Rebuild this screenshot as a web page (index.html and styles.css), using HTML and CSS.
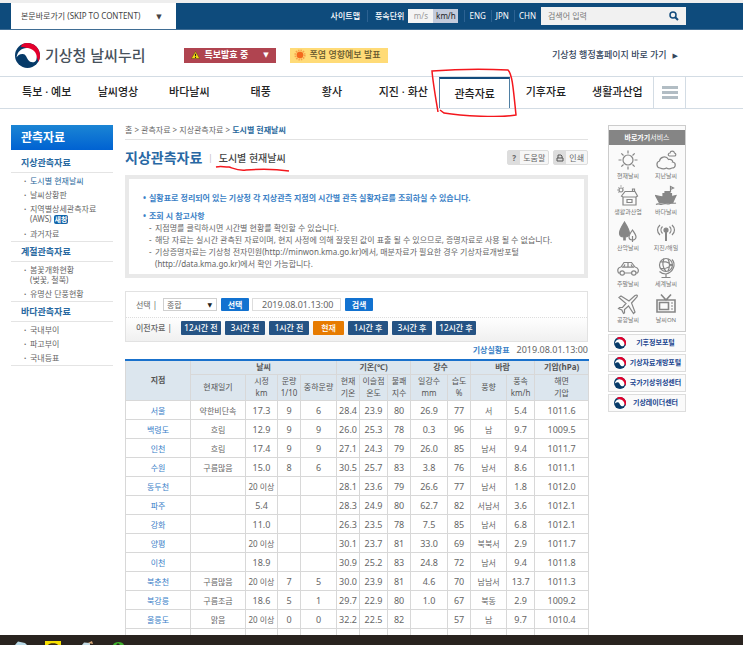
FILE: index.html
```html
<!DOCTYPE html>
<html lang="ko">

<head>
  <meta charset="UTF-8">
  <meta name="viewport" content="width=device-width, initial-scale=1.0">
  <title>기상청 날씨누리</title>
  <link rel="stylesheet" href="styles.css">
</head>

<body>
  <svg class="defs" aria-hidden="true">
    <symbol id="emblem" viewBox="0 0 24 24">
      <circle cx="12" cy="12" r="12" fill="#063a68" />
      <path d="M7 1.100A12 12 0 0 1 22.400 18C20.500 10 15 4 5.500 3.500z" fill="#e4002c" />
      <path d="M1.500 14C2 8 7 4 12.500 4.800C19 6 22 11.500 20.500 16C19 19.500 14.500 19 12.500 16C10.500 13 10.500 10.800 7.500 10.500C4.500 10.300 2.500 12 1.500 14z" fill="#fff" />
    </symbol>
  </svg>

  <div class="page">
    <div class="top">
      <div class="wrap top-in">
        <button class="skip">본문바로가기 (SKIP TO CONTENT)<span class="arr">▼</span></button>
        <div class="util">
          <a href="#">사이트맵</a>
          <span class="unit">풍속단위</span>
          <div class="toggle"><button>m/s</button><button class="on">km/h</button></div>
          <div class="lang"><a href="#">ENG</a><a href="#">JPN</a><a href="#">CHN</a></div>
          <form class="search">
            <input type="text" placeholder="검색어 입력" aria-label="검색어 입력">
            <button type="button" aria-label="검색">
              <svg viewBox="0 0 10 10" width="10" height="10"><circle cx="4" cy="4" r="3" fill="none" stroke="#124b7c" stroke-width="1.500" /><path d="M6.200 6.200L9 9" stroke="#124b7c" stroke-width="2" /></svg>
            </button>
          </form>
        </div>
      </div>
    </div>

    <header class="wrap header">
      <a class="brand" href="#"><svg class="logo"><use href="#emblem" /></svg>기상청 날씨누리</a>
      <button class="warn">
        <svg viewBox="0 0 10 9" width="9" height="8"><path d="M5 .5L9.700 8.500H.3z" fill="#f4d913" stroke="#5a4a10" stroke-width=".6" /><path d="M5 3v3M5 6.800v1" stroke="#222" stroke-width="1.200" /></svg>
        특보발효 중<span class="arr">▼</span>
      </button>
      <a class="heat" href="#">
        <svg viewBox="0 0 12 12" width="12" height="12"><circle cx="6" cy="6" r="4.600" fill="none" stroke="#f7a04a" stroke-width="2" stroke-dasharray="1.400 1" /><circle cx="6" cy="6" r="3.300" fill="#f4691c" /></svg>
        폭염 영향예보 발표
      </a>
      <a class="admin" href="#">기상청 행정홈페이지 바로 가기<span class="arr">▶</span></a>
    </header>

    <nav class="nav">
      <div class="wrap nav-in">
        <a href="#">특보 · 예보</a>
        <a href="#">날씨영상</a>
        <a href="#">바다날씨</a>
        <a href="#">태풍</a>
        <a href="#">황사</a>
        <a href="#">지진 · 화산</a>
        <a class="on" href="#">관측자료
          <svg class="pen" viewBox="0 0 92 52" width="92" height="52"><path d="M9 47C7 35 4 18 3 6C30 4 58 4 79 5C83 9 84 20 87 50C72 53 32 51 15 48L11 45" /></svg>
        </a>
        <a href="#">기후자료</a>
        <a href="#">생활과산업</a>
        <button class="all" aria-label="전체메뉴"><i></i><i></i><i></i></button>
      </div>
    </nav>

    <div class="wrap body">
      <aside class="side">
        <h2>관측자료</h2>
        <h3>지상관측자료</h3>
        <ul>
          <li><a class="on" href="#">도시별 현재날씨</a></li>
          <li><a href="#">날씨상황판</a></li>
          <li><a href="#">지역별상세관측자료<br>(AWS) <b>새창</b></a></li>
          <li><a href="#">과거자료</a></li>
        </ul>
        <h3>계절관측자료</h3>
        <ul>
          <li><a href="#">봄꽃개화현황<br>(벚꽃, 철쭉)</a></li>
          <li><a href="#">유명산 단풍현황</a></li>
        </ul>
        <h3>바다관측자료</h3>
        <ul>
          <li><a href="#">국내부이</a></li>
          <li><a href="#">파고부이</a></li>
          <li><a href="#">국내등표</a></li>
        </ul>
      </aside>

      <main class="main">
        <div class="path">홈 &gt; 관측자료 &gt; 지상관측자료 &gt; <b>도시별 현재날씨</b></div>
        <div class="title">
          <h1>지상관측자료</h1>
          <span class="bar">|</span>
          <h2>도시별 현재날씨
            <svg class="pen" viewBox="0 0 76 8" width="76" height="8"><path d="M1 2C6 1 8 2 14 2C20 4 24 6 31 5C45 4 60 4 74 6" /></svg>
          </h2>
          <div class="tools">
            <button><span class="ic">?</span>도움말</button>
            <button><span class="ic"><svg viewBox="0 0 8 8" width="8" height="8"><path d="M2 4V1h3l1 1v2M1 4h6v3H1z" fill="none" stroke="#555" /></svg></span>인쇄</button>
          </div>
        </div>

        <div class="info">
          <p class="dot">실황표로 정리되어 있는 기상청 각 지상관측 지점의 시간별 관측 실황자료를 조회하실 수 있습니다.</p>
          <p class="dot">조회 시 참고사항</p>
          <ul>
            <li>지점명를 클릭하시면 시간별 현황를 확인할 수 있습니다.</li>
            <li>해당 자료는 실시간 관측된 자료이며, 현지 사정에 의해 잘못된 값이 표출 될 수 있으므로, 증명자료로 사용 될 수 없습니다.</li>
            <li>기상증명자료는 기상청 전자민원(http://minwon.kma.go.kr)에서, 매분자료가 필요한 경우 기상자료개방포털<br>(http://data.kma.go.kr)에서 확인 가능합니다.</li>
          </ul>
        </div>

        <form class="form">
          <div class="row">
            <label for="kind">선택 |</label>
            <div class="sel"><select id="kind"><option>종합</option><option>기온</option></select></div>
            <button type="button" class="blue">선택</button>
            <input type="text" class="date" value="2019.08.01.13:00" aria-label="시각">
            <button type="button" class="blue">검색</button>
          </div>
          <div class="row times">
            <span>이전자료 |</span>
            <button type="button">12시간 전</button>
            <button type="button">3시간 전</button>
            <button type="button">1시간 전</button>
            <button type="button" class="now">현재</button>
            <button type="button">1시간 후</button>
            <button type="button">3시간 후</button>
            <button type="button">12시간 후</button>
          </div>
        </form>

        <div class="stamp"><b>기상실황표</b>2019.08.01.13:00</div>
        <table class="data">
          <colgroup>
            <col class="c65"><col class="c55"><col class="c32"><col class="c23"><col class="c36">
            <col class="c23"><col class="c28"><col class="c23"><col class="c37"><col class="c23">
            <col class="c36"><col class="c28"><col class="c54">
          </colgroup>
          <thead>
            <tr class="group">
              <th rowspan="2">지점</th>
              <th colspan="4">날씨</th>
              <th colspan="3">기온(℃)</th>
              <th colspan="2">강수</th>
              <th colspan="2">바람</th>
              <th>기압(hPa)</th>
            </tr>
            <tr class="sub">
              <th>현재일기</th>
              <th>시정<br>km</th>
              <th>운량<br>1/10</th>
              <th>중하운량</th>
              <th>현재<br>기온</th>
              <th>이슬점<br>온도</th>
              <th>불쾌<br>지수</th>
              <th>일강수<br>mm</th>
              <th>습도<br>%</th>
              <th>풍향</th>
              <th>풍속<br>km/h</th>
              <th>해면<br>기압</th>
            </tr>
          </thead>
          <tbody>
            <tr><td><a href="#">서울</a></td><td class="t">약한비단속</td><td>17.3</td><td>9</td><td>6</td><td>28.4</td><td>23.9</td><td>80</td><td>26.9</td><td>77</td><td class="t">서</td><td>5.4</td><td>1011.6</td></tr>
            <tr><td><a href="#">백령도</a></td><td class="t">흐림</td><td>12.9</td><td>9</td><td>9</td><td>26.0</td><td>25.3</td><td>78</td><td>0.3</td><td>96</td><td class="t">남</td><td>9.7</td><td>1009.5</td></tr>
            <tr><td><a href="#">인천</a></td><td class="t">흐림</td><td>17.4</td><td>9</td><td>9</td><td>27.1</td><td>24.3</td><td>79</td><td>26.0</td><td>85</td><td class="t">남서</td><td>9.4</td><td>1011.7</td></tr>
            <tr><td><a href="#">수원</a></td><td class="t">구름많음</td><td>15.0</td><td>8</td><td>6</td><td>30.5</td><td>25.7</td><td>83</td><td>3.8</td><td>76</td><td class="t">남서</td><td>8.6</td><td>1011.1</td></tr>
            <tr><td><a href="#">동두천</a></td><td></td><td class="t">20 이상</td><td></td><td></td><td>28.1</td><td>23.6</td><td>79</td><td>26.6</td><td>77</td><td class="t">남서</td><td>1.8</td><td>1012.0</td></tr>
            <tr><td><a href="#">파주</a></td><td></td><td>5.4</td><td></td><td></td><td>28.3</td><td>24.9</td><td>80</td><td>62.7</td><td>82</td><td class="t">서남서</td><td>3.6</td><td>1012.1</td></tr>
            <tr><td><a href="#">강화</a></td><td></td><td>11.0</td><td></td><td></td><td>26.3</td><td>23.5</td><td>78</td><td>7.5</td><td>85</td><td class="t">남서</td><td>6.8</td><td>1012.1</td></tr>
            <tr><td><a href="#">양평</a></td><td></td><td class="t">20 이상</td><td></td><td></td><td>30.1</td><td>23.7</td><td>81</td><td>33.0</td><td>69</td><td class="t">북북서</td><td>2.9</td><td>1011.7</td></tr>
            <tr><td><a href="#">이천</a></td><td></td><td>18.9</td><td></td><td></td><td>30.9</td><td>25.2</td><td>83</td><td>24.8</td><td>72</td><td class="t">남서</td><td>9.4</td><td>1011.8</td></tr>
            <tr><td><a href="#">북춘천</a></td><td class="t">구름많음</td><td class="t">20 이상</td><td>7</td><td>5</td><td>30.0</td><td>23.9</td><td>81</td><td>4.6</td><td>70</td><td class="t">남남서</td><td>13.7</td><td>1011.3</td></tr>
            <tr><td><a href="#">북강릉</a></td><td class="t">구름조금</td><td>18.6</td><td>5</td><td>1</td><td>29.7</td><td>22.9</td><td>80</td><td>1.0</td><td>67</td><td class="t">북동</td><td>2.9</td><td>1009.2</td></tr>
            <tr><td><a href="#">울릉도</a></td><td class="t">맑음</td><td class="t">20 이상</td><td>0</td><td>0</td><td>32.2</td><td>22.5</td><td>82</td><td></td><td>57</td><td class="t">남</td><td>9.7</td><td>1010.4</td></tr>
            <tr><td><a href="#">속초</a></td><td></td><td class="t">20 이상</td><td></td><td></td><td>31.0</td><td>24.2</td><td>82</td><td>0.3</td><td>67</td><td class="t">남동</td><td>6.1</td><td>1009.4</td></tr>
          </tbody>
        </table>
      </main>

      <aside class="quick">
        <div class="box">
          <h3><b>바로가기</b>서비스</h3>
          <div class="icons">
            <a href="#"><svg viewBox="0 0 22 22"><circle cx="11" cy="11" r="5" /><path d="M11 1.500v3M11 17.500v3M1.500 11h3M17.500 11h3M4.300 4.300l2.200 2.200M15.500 15.500l2.200 2.200M17.700 4.300l-2.200 2.200M4.300 17.700l2.200-2.200" /></svg>현재날씨</a>
            <a href="#"><svg viewBox="0 0 22 22"><path d="M5 19a3.600 3.600 0 0 1-.5-7C5 8 11 6 13.500 10.500C17 10 18 12 17.500 13C21.500 13.500 21 19 17 19C15 20 13 20 11.500 19C9 20.500 7 20 5 19z" /><path d="M14.500 7c-2-.5-1.500-3 .5-3C15.500 1.500 19 1.500 19.500 4C21.500 4.500 21 7 19.500 7z" /></svg>지난날씨</a>
            <a href="#"><svg viewBox="0 0 22 22"><path d="M6 20V12l-1.500-1L8 6.500h10l2.500 4.500L19 12v8zM6 12h13M10 14.500h5v3h-5zM15.500 6V4h2v2" /><circle cx="4" cy="5" r="2" /><path d="M4 .5v1M.3 5h1M1.500 2.500l.6.600M6.500 2.500l-.6.600M1.500 7.500l.6-.6" /></svg>생활과산업</a>
            <a href="#"><svg viewBox="0 0 22 22"><path class="fill" d="M.5 10.500L8 12V8.500h2V6.500h5v2h1.500v3L21 10.500L17.500 18H4.500z" /><path d="M15.500 7V1.500l3 1.500l-3 1.500M1 19.500c3-2 4 1 7-.5s4 1 7-.5s3 .5 6-.5" /></svg>바다날씨</a>
            <a href="#"><svg viewBox="0 0 22 22"><path class="fill" d="M7.500 1C10 5 12.500 9 12.500 12.500C12 15 10 16 8.200 16V19H6.800V16C4.500 16 2.500 14.500 2.500 12C2.500 9 5 5 7.500 1z" /><path class="white" d="M15.500 9C17.500 12 19 14 19 16C19 18 17 19 15.500 19C13.500 19 12 18 12 16C12 14 14 11 15.500 9zM15.500 15v6" /></svg>산악날씨</a>
            <a href="#"><svg viewBox="0 0 22 22"><circle class="fill" cx="11" cy="9" r="2" /><path d="M11 10v10" stroke-width="2" /><path d="M7.500 5.500c-2 2-2 5 0 7M14.500 5.500c2 2 2 5 0 7M5 4c-3.300 3-3.300 7 0 10M17 4c3.300 3 3.300 7 0 10" /></svg>지진/해일</a>
            <a href="#"><svg viewBox="0 0 22 22"><path d="M3 16H1.500C0 13 1 10.500 4 10L7 5.500h7.500L18 10C21.500 10.500 22 14 20.500 16H19M7.500 16h7M5 10.200h12M11 6v4M8 7.500l-1.500 2.500M14 7.500l1.500 2.500" /><circle cx="5.200" cy="16" r="2.200" /><circle cx="16.800" cy="16" r="2.200" /></svg>주말날씨</a>
            <a href="#"><svg viewBox="0 0 22 22"><circle cx="11" cy="8" r="6.500" /><path d="M5 5C9 4 14 5 17 9M5.500 11.500C9 12 13 12 17 7M9 1.500C7 6 8 11 11 14.500M13 2C15 6 15 10 13 14M17 2.500c4.500 5 1 13-6 14.500C8 17 6 16 4.500 14.500M11 17v3M6.500 20.500h9" /></svg>세계날씨</a>
            <a href="#"><svg viewBox="0 0 22 22"><path d="M2 4.500L4 3L12 8L18 2.500C20 1.500 21 2.500 20 4L14.500 10L18 19L16.500 20.500L11.500 13L7.500 16.500L7.500 20L6.500 20.500L4.800 17L1.500 15.500L2.500 14.500L5.500 14.500L9 10.500z" /></svg>공항날씨</a>
            <a href="#"><svg viewBox="0 0 22 22"><path d="M2 7h18v12H2zM4.500 9.500h9v7h-9zM6 1.500L11 7L16 1.500" stroke-width="1.600" /><path d="M16 10h2M16 13h2M16 16h2" /></svg>날씨ON</a>
          </div>
        </div>
        <a class="bn" href="#"><svg class="logo"><use href="#emblem" /></svg><span>기후정보포털</span></a>
        <a class="bn" href="#"><svg class="logo"><use href="#emblem" /></svg><span>기상자료개방포털</span></a>
        <a class="bn" href="#"><svg class="logo"><use href="#emblem" /></svg><span>국가기상위성센터</span></a>
        <a class="bn" href="#"><svg class="logo"><use href="#emblem" /></svg><span>기상레이더센터</span></a>
      </aside>
    </div>
  </div>

  <footer class="taskbar">
    <svg viewBox="0 0 130 10" width="130" height="10">
      <path d="M15 10L18 6.500L25 8L27 10z" fill="#b9d9e6" />
      <path d="M45 6h16v4H45z" fill="#f8e000" /><path d="M48 10C49 7.500 57 7.500 58 10z" fill="#3b2a17" />
      <path d="M82 10L84 7.500L90 8V10z" fill="#c4dbe4" /><path d="M88 8L92 6L93 9z" fill="#d9a877" />
      <path d="M113 10C114 6 123 6 124 10H120L118 8L116 10z" fill="#3fb02c" />
    </svg>
  </footer>
</body>

</html>
```

FILE: styles.css
```css
* {
  box-sizing: border-box;
}

body,
h1,
h2,
h3,
p,
ul {
  margin: 0;
  padding: 0;
}

body {
  display: flex;
  flex-direction: column;
  height: 100vh;
  overflow: hidden;
  font-family: "Noto Sans", "Noto Sans CJK KR", sans-serif;
  font-size: 8px;
  line-height: 12px;
  color: #666;
  background-color: #fff;
}

ul {
  list-style: none;
}

a {
  color: inherit;
  text-decoration: none;
}

button,
input,
select {
  margin: 0;
  padding: 0;
  border: 0;
  border-radius: 0;
  font: inherit;
  color: inherit;
  background: none;
}

svg {
  display: block;
  flex: none;
}

.defs {
  position: absolute;
  width: 0;
  height: 0;
}

.page {
  flex: 1;
  min-height: 0;
  overflow: hidden;
}

.wrap {
  padding: 0 57px 0 11px;
}

.arr {
  font-family: "DejaVu Sans", sans-serif;
  font-size: 7px;
}

/* 상단 */
.top {
  height: 30px;
  background-color: #0e4b7c;
  border-top: 3px solid #eee;
  border-bottom: 1px solid #3f6d94;
}

.top-in {
  display: flex;
  justify-content: space-between;
  height: 26px;
}

.skip {
  padding: 0 14px 0 10px;
  color: #444;
  background-color: #fff;
}

.skip .arr {
  margin-left: 16px;
}

.util {
  display: flex;
  align-items: center;
  color: #fff;
}

.unit {
  margin-left: 7px;
  padding-left: 7px;
  border-left: 1px solid #2c6292;
}

.util > a,
.unit {
  font-weight: 500;
}

.toggle {
  display: flex;
  margin-left: 4px;
}

.toggle button {
  width: 25px;
  height: 14px;
  color: #999;
  background-color: #f4f4f4;
}

.toggle .on {
  color: #222;
  background-color: #c3cbdc;
}

.lang {
  display: flex;
  margin-left: 6px;
}

.lang a {
  padding: 0 5px 0 4px;
  border-left: 1px solid #2c6292;
}

.search {
  display: flex;
  width: 145px;
  height: 18px;
  background-color: #f1f1f1;
}

.search input {
  flex: 1;
  min-width: 0;
  padding-left: 7px;
}

.search input::placeholder {
  color: #777;
}

.search button {
  padding: 0 7px;
}

.header {
  display: flex;
  align-items: center;
  height: 46px;
  padding-top: 4px;
  font-size: 9px;
}

.brand {
  display: flex;
  align-items: center;
  gap: 5px;
  padding-left: 4px;
  font-size: 15px;
  font-weight: 500;
  color: #48525c;
}

.brand .logo {
  width: 25px;
  height: 25px;
}

.warn,
.heat {
  display: flex;
  align-items: center;
  height: 15px;
  padding: 0 7px;
}

.warn {
  gap: 5px;
  width: 92px;
  margin-left: 38px;
  font-weight: 700;
  color: #fff;
  background-color: #b04450;
}

.warn .arr {
  margin-left: auto;
}

.heat {
  gap: 4px;
  width: 98px;
  margin-left: 14px;
  padding: 0 4px;
  font-weight: 500;
  color: #66582f;
  background-color: #ffdb77;
}

.admin {
  margin-left: auto;
  padding-right: 8px;
  font-weight: 500;
  color: #35465c;
}

.admin .arr {
  margin-left: 6px;
}

/* 메뉴 */
.nav {
  height: 33px;
  border-top: 1px solid #d3dce4;
  border-bottom: 1px solid #d3dce4;
}

.nav-in {
  display: grid;
  grid-template-columns: repeat(9, 1fr) 33px;
  height: 31px;
}

.nav a {
  font-size: 11px;
  font-weight: 500;
  line-height: 29px;
  text-align: center;
  color: #222;
  white-space: nowrap;
}

.nav .on {
  position: relative;
  border: 1px solid #4f7fa3;
  border-top: 2px solid #134b7c;
  border-bottom: 0;
}

.pen {
  position: absolute;
  fill: none;
  stroke: #f4171d;
  stroke-width: 1.5;
}

.nav .pen {
  top: -14px;
  left: -11px;
}

.all {
  display: flex;
  flex-direction: column;
  justify-content: center;
  align-items: center;
  gap: 2px;
  border-left: 1px solid #d3dce4;
  border-right: 1px solid #d3dce4;
}

.all i {
  width: 16px;
  height: 3px;
  background-color: #b2bdc4;
}

.body {
  display: grid;
  grid-template-columns: 102px 1fr 78px;
  align-items: start;
  padding-top: 13px;
}

/* 왼쪽 메뉴 */
.side,
.quick {
  margin-top: 3px;
}

.side h2 {
  height: 28px;
  padding-left: 10px;
  font-size: 12px;
  line-height: 25px;
  color: #fff;
  background: linear-gradient(#1b85d4, #0062d2) no-repeat 0 0 / 100% 25px;
}

.side h3 {
  height: 20px;
  padding-left: 10px;
  font-size: 9px;
  line-height: 19px;
  color: #2868a0;
  border-bottom: 1px solid #e4e4e4;
}

.side ul {
  padding: 1px 0 0 13px;
  border-bottom: 1px solid #e4e4e4;
}

.side li {
  display: flex;
  padding: 2px 0;
  line-height: 10px;
  white-space: nowrap;
}

.side li::before {
  content: "·";
  width: 6px;
  font-weight: 700;
}

.side .on {
  color: #28689c;
}

.side b {
  padding: 0 1px;
  font-size: 7px;
  color: #fff;
  background-color: #1264a8;
  border-radius: 2px;
}

.main {
  min-width: 0;
  margin: 0 20px 0 12px;
}

.path {
  height: 18px;
  line-height: 16px;
  border-bottom: 1px solid #e2e2e2;
}

.path b {
  color: #28689c;
}

.title {
  display: flex;
  align-items: center;
  height: 35px;
}

.title h1 {
  font-size: 14px;
  color: #2868a4;
}

.title .bar {
  margin: 0 6px;
  color: #bbb;
}

.title h2 {
  position: relative;
  font-size: 10px;
  font-weight: 500;
  color: #444;
}

.title .pen {
  top: 13px;
  left: -4px;
}

.tools {
  display: flex;
  gap: 4px;
  margin-left: auto;
}

.tools button {
  display: flex;
  align-items: center;
  gap: 3px;
  height: 15px;
  padding-right: 3px;
  background-color: #f6f6f6;
  border: 1px solid #ddd;
  border-radius: 2px;
}

.tools .ic {
  display: flex;
  justify-content: center;
  align-items: center;
  width: 12px;
  height: 13px;
  font-weight: 700;
  background-color: #ddd;
}

.info {
  height: 103px;
  padding: 12px 14px;
  border: 4px solid #e9e9e9;
}

.info .dot {
  display: flex;
  height: 18px;
  font-weight: 700;
  line-height: 14px;
  color: #3a7fc6;
  white-space: nowrap;
}

.info .dot::before {
  content: "•";
  width: 6px;
}

.info .dot + .dot {
  height: 13px;
}

.info li {
  display: flex;
  padding-left: 6px;
  line-height: 12px;
  white-space: nowrap;
}

.info li::before {
  content: "-";
  width: 6px;
}

.form {
  margin-top: 13px;
  border: 1px solid #e2e2e2;
  background: linear-gradient(#fff 50%, #f0f0f0);
}

.row {
  display: flex;
  align-items: center;
  height: 25px;
  padding-left: 10px;
}

.row label {
  width: 27px;
}

.sel {
  position: relative;
  width: 54px;
  height: 13px;
  border: 1px solid #d0d0d0;
  background-color: #fff;
}

.sel::after {
  content: "▼";
  position: absolute;
  right: 4px;
  top: 0;
  font: 6px/11px "DejaVu Sans", sans-serif;
  color: #222;
  pointer-events: none;
}

.sel select {
  display: block;
  width: 100%;
  height: 11px;
  padding-left: 3px;
  line-height: 11px;
  appearance: none;
}

.blue {
  width: 28px;
  height: 13px;
  margin: 0 3px 0 4px;
  font-weight: 700;
  line-height: 13px;
  color: #fff;
  background-color: #1272d0;
  border-radius: 1px;
}

.date {
  width: 89px;
  height: 13px;
  padding-left: 9px;
  font-size: 9px;
  border: 1px solid #ddd;
  background-color: #fff;
}

.times {
  gap: 4px;
  height: 24px;
  padding-bottom: 3px;
  border-top: 1px dotted #ddd;
}

.times span {
  width: 41px;
  font-weight: 500;
}

.times button {
  width: 40px;
  height: 14px;
  font-weight: 500;
  line-height: 14px;
  color: #fff;
  background-color: #255384;
  border-radius: 1px;
}

.times .now {
  width: 31px;
  background-color: #e77b00;
}

.stamp {
  height: 17px;
  font-size: 9px;
  line-height: 15px;
  text-align: right;
}

.stamp b {
  margin-right: 7px;
  font-size: 8px;
  color: #3a7fc6;
}

/* 실황표 */
.data {
  width: 100%;
  table-layout: fixed;
  border-collapse: collapse;
  border-top: 2px solid #1971cc;
}

.c65 { width: 65px; }
.c55 { width: 55px; }
.c54 { width: 54px; }
.c37 { width: 37px; }
.c36 { width: 36px; }
.c32 { width: 32px; }
.c28 { width: 28px; }
.c23 { width: 23px; }

.data th,
.data td {
  padding: 0;
  text-align: center;
  border: 1px solid #d8d8d8;
  white-space: nowrap;
}

.data th {
  background-color: #dce6ee;
  color: #555;
}

.data .group th {
  height: 14px;
  border-top: 2px solid #1971cc;
}

.data .sub th {
  height: 26px;
  font-weight: 400;
}

.data td {
  height: 19px;
  padding-top: 3px;
  font-size: 9px;
}

.data a,
.data .t {
  font-size: 8px;
}

.data a {
  color: #3a80c8;
}

/* 바로가기 */
.quick .box {
  height: 207px;
  margin-bottom: 2px;
  padding-top: 4px;
  border: 1px solid #ccc;
  background-color: #fafafa;
}

.quick h3 {
  font-size: 7px;
  font-weight: 400;
  line-height: 15px;
  text-align: center;
  color: #fff;
  background-color: #858585;
}

.icons {
  display: grid;
  grid-template-columns: 1fr 1fr;
  grid-auto-rows: 36px;
  padding-top: 4px;
}

.icons a {
  display: flex;
  flex-direction: column;
  align-items: center;
  font-size: 6px;
  line-height: 10px;
  color: #777;
  white-space: nowrap;
}

.icons svg {
  width: 22px;
  height: 22px;
  fill: none;
  stroke: #868686;
  stroke-width: 1.2;
}

.icons .fill {
  fill: #868686;
}

.icons .white {
  fill: #fafafa;
}

.bn {
  display: flex;
  align-items: center;
  height: 18px;
  margin-bottom: 2px;
  padding-left: 5px;
  font-size: 7px;
  font-weight: 700;
  color: #21458f;
  border: 1px solid #ddd;
  background-color: #fafafa;
  white-space: nowrap;
}

.bn .logo {
  width: 12px;
  height: 12px;
}

.bn span {
  flex: 1;
  text-align: center;
}

.taskbar {
  height: 10px;
  background-color: #29231f;
}
```
